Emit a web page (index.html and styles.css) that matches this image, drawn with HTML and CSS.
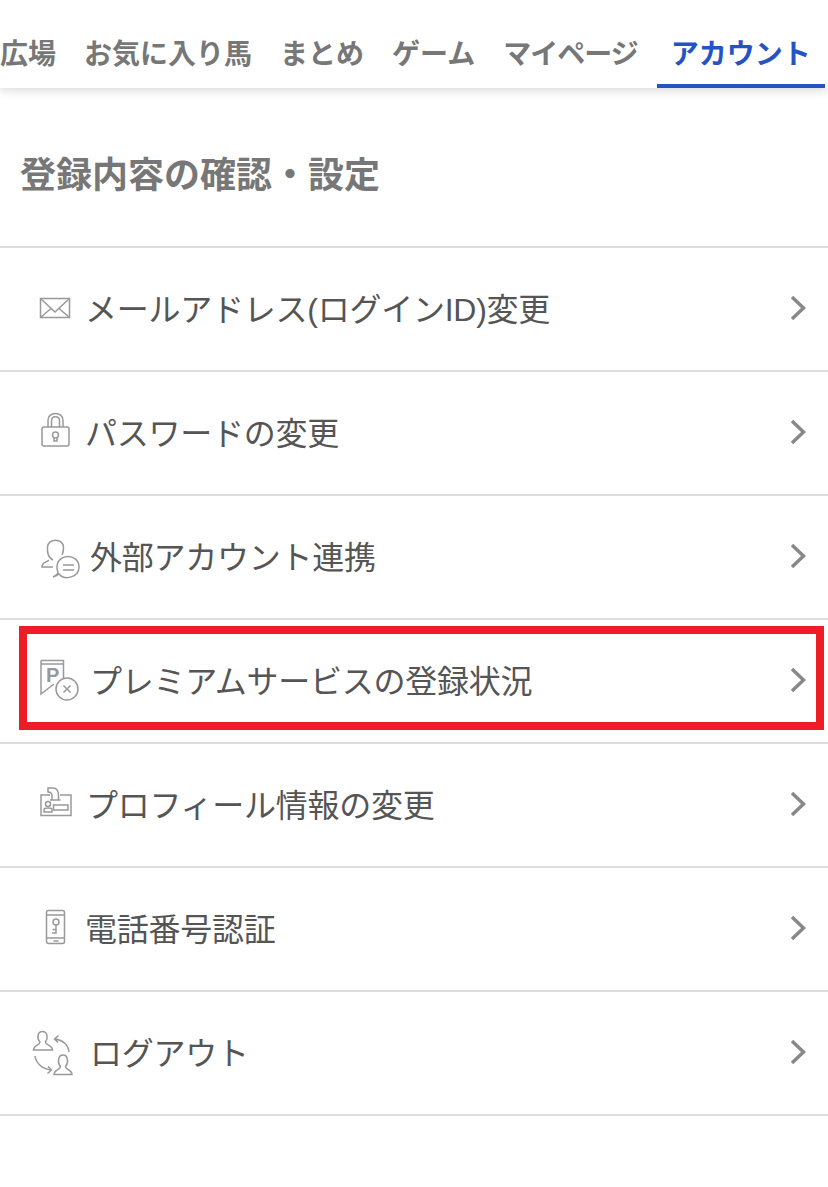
FILE: index.html
```html
<!DOCTYPE html>
<html lang="ja">
<head>
    <meta charset="UTF-8">
    <meta name="viewport" content="width=device-width, initial-scale=1.0">
    <title>アカウント</title>
    <link rel="stylesheet" href="styles.css">
</head>
<body>
    <header class="tabs">
        <nav class="tab-list">
            <a class="tab" href="#">広場</a>
            <a class="tab" href="#">お気に入り馬</a>
            <a class="tab" href="#">まとめ</a>
            <a class="tab" href="#">ゲーム</a>
            <a class="tab tab-tight" href="#">マイページ</a>
            <a class="tab tab-active" href="#">アカウント</a>
        </nav>
    </header>

    <h1 class="page-title">登録内容の確認・設定</h1>

    <ul class="menu">
        <li class="menu-row">
            <svg class="icon icon-sm" viewBox="0 0 53 48">
                <rect x="8.5" y="12.5" width="29" height="19"/>
                <path d="M8.5 12.5 23 26 37.5 12.5M8.5 31.5 19 22.500M37.500 31.500 27 22.500"/>
            </svg>
            <span class="menu-label">メールアドレス(ログインID)変更</span>
            <svg class="chevron" viewBox="0 0 16 26"><path d="M2 2 13.500 13 2 24"/></svg>
        </li>
        <li class="menu-row">
            <svg class="icon icon-sm" viewBox="0 0 53 48">
                <rect x="10" y="17" width="27" height="19" rx="2"/>
                <path d="M16 17V10.500C16 1 31 1 31 10.500V17"/>
                <path d="M19.500 17V10.500C19.500 5.500 27.500 5.500 27.500 10.500V17"/>
                <circle cx="23.500" cy="25" r="3"/>
                <path d="M22 27.500V31H25V27.500"/>
            </svg>
            <span class="menu-label">パスワードの変更</span>
            <svg class="chevron" viewBox="0 0 16 26"><path d="M2 2 13.500 13 2 24"/></svg>
        </li>
        <li class="menu-row">
            <svg class="icon icon-lg" viewBox="0 0 58 48">
                <path d="M21 26C17 24 15 19 15.500 13 16 4 31 4 31.500 13 31.600 16 31 19 30 21"/>
                <path d="M17 26C14 29 10 28 10 33H21"/>
                <path d="M21 43C25 42 26 41 27 40 33 47 47 43 47 33 47 19 25 19 25 33 25 36 26 38 26 39 25 41 23 42 21 43Z"/>
                <path d="M31 31H42M31 36H42"/>
            </svg>
            <span class="menu-label">外部アカウント連携</span>
            <svg class="chevron" viewBox="0 0 16 26"><path d="M2 2 13.500 13 2 24"/></svg>
        </li>
        <li class="menu-row menu-row-marked">
            <svg class="icon icon-lg" viewBox="0 0 58 48">
                <path d="M9 6H31.500M9 2.500H31.500V20M9 2.500V36L22 26"/>
                <text class="icon-letter" x="14" y="24">P</text>
                <circle cx="35" cy="31" r="11"/>
                <path d="M31.500 27.500 38.500 34.500M38.500 27.500 31.500 34.500"/>
            </svg>
            <span class="menu-label">プレミアムサービスの登録状況</span>
            <svg class="chevron" viewBox="0 0 16 26"><path d="M2 2 13.500 13 2 24"/></svg>
        </li>
        <li class="menu-row">
            <svg class="icon icon-md" viewBox="0 0 54 48">
                <path d="M18 13H9V33.500H39V13H28"/>
                <path d="M18 18H28.500M20 18V14C20 11 19 10 16 10V6H21C25 6 26.500 10 26.500 14V18"/>
                <circle cx="16" cy="22" r="2.500"/>
                <path d="M12 30V27.500C12 25.500 20 25.500 20 27.500V30Z"/>
                <rect x="21.500" y="23" width="14.500" height="5"/>
            </svg>
            <span class="menu-label">プロフィール情報の変更</span>
            <svg class="chevron" viewBox="0 0 16 26"><path d="M2 2 13.500 13 2 24"/></svg>
        </li>
        <li class="menu-row">
            <svg class="icon icon-sm" viewBox="0 0 53 48">
                <rect x="14.500" y="4.500" width="18" height="33" rx="2"/>
                <path d="M14.500 9H32.500M14.500 32H32.500"/>
                <circle cx="24" cy="16" r="3"/>
                <path d="M24 19V27H20M24 23.500H20.500"/>
                <path d="M21.500 35H26.500"/>
            </svg>
            <span class="menu-label">電話番号認証</span>
            <svg class="chevron" viewBox="0 0 16 26"><path d="M2 2 13.500 13 2 24"/></svg>
        </li>
        <li class="menu-row">
            <svg class="icon icon-lg" viewBox="0 0 58 48">
                <path d="M1.500 20C1.500 15 8 15.500 8 12 5 9 5 1.500 10.500 1.500 16 1.500 16 9 13.500 12 13.500 15.500 20.500 15 20.500 20Z"/>
                <path d="M22 44.500C22 39.500 28.500 40 28.500 36.500 25.500 33.500 25.500 25 31 25 36.500 25 36.500 33.500 33.500 36.500 33.500 40 40 39.500 40 44.500Z"/>
                <path d="M37 22C36.500 15 31 10 23 9M26.500 5.500 22.500 9 26 12.500"/>
                <path d="M3 26C4 33 10 39 19 40M15.500 43.500 19.500 40 16 36.500"/>
            </svg>
            <span class="menu-label">ログアウト</span>
            <svg class="chevron" viewBox="0 0 16 26"><path d="M2 2 13.500 13 2 24"/></svg>
        </li>
    </ul>
</body>
</html>
```

FILE: styles.css
```css
body {
    margin: 0;
    background-color: #fff;
    font-family: "Liberation Sans", "Noto Sans CJK JP", sans-serif;
    color: #555;
}

.tabs {
    height: 88px;
    overflow: hidden;
    background-color: #fff;
    box-shadow: 0 2px 10px rgba(0, 0, 0, 0.16);
}

.tab-list {
    display: flex;
    height: 88px;
    margin-left: -14px;
}

.tab {
    box-sizing: border-box;
    flex: none;
    height: 88px;
    padding: 33px 14px 0;
    font-size: 28px;
    font-weight: 700;
    line-height: 44px;
    color: #777;
    text-decoration: none;
    white-space: nowrap;
}

.tab-tight {
    padding-right: 19px;
    letter-spacing: -1px;
}

.tab-active {
    color: #2653c4;
    border-bottom: 4px solid #2653c4;
}

.page-title {
    box-sizing: border-box;
    height: 160px;
    margin: 0;
    padding: 62px 0 0 20px;
    font-size: 36px;
    font-weight: 700;
    line-height: 52px;
    color: #777;
    border-bottom: 2px solid #ddd;
}

.menu {
    margin: 0;
    padding: 0;
    list-style: none;
}

.menu-row {
    position: relative;
    box-sizing: border-box;
    display: flex;
    align-items: center;
    height: 124px;
    padding: 2px 22px 0 32px;
    border-bottom: 2px solid #ddd;
}

.menu-row-marked::after {
    content: "";
    position: absolute;
    top: 6px;
    left: 19px;
    width: 805px;
    height: 104px;
    box-sizing: border-box;
    border: 8px solid #ee1c25;
}

.icon {
    flex: none;
    height: 48px;
    fill: none;
    stroke: #999;
    stroke-width: 1.5;
}

.icon-sm {
    width: 53px;
}

.icon-md {
    width: 54px;
}

.icon-lg {
    width: 58px;
}

.icon-letter {
    font-size: 20px;
    font-weight: 700;
    fill: #999;
    stroke: none;
}

.menu-label {
    flex: 1;
    font-size: 32px;
    line-height: 46px;
    letter-spacing: -0.25px;
    white-space: nowrap;
}

.chevron {
    flex: none;
    width: 16px;
    height: 26px;
    margin-top: -4px;
    fill: none;
    stroke: #888;
    stroke-width: 3.5;
}
```
